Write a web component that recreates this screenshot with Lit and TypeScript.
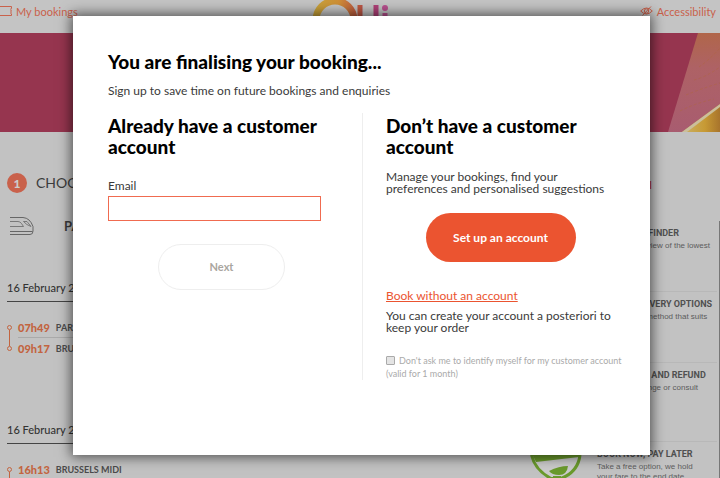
import { LitElement, html, css, svg } from "lit";
import { customElement } from "lit/decorators.js";

const sans = css`Lato, "Liberation Sans", sans-serif`;

interface Stop { time: string; station: string; }
interface Service { title: string; text: string; }

const SERVICES: Service[] = [
  { title: "BEST PRICE FINDER", text: "Get a full overview of the lowest\nfares" },
  { title: "SIMPLE DELIVERY OPTIONS", text: "Choosing the method that suits\nyou" },
  { title: "EXCHANGES AND REFUND", text: "Cancel, exchange or consult" },
  { title: "BOOK NOW, PAY LATER", text: "Take a free option, we hold\nyour fare to the end date" },
];

@customElement("site-header")
class SiteHeader extends LitElement {
  static styles = css`
    :host { display: block; font-family: ${sans}; }
    header { display: grid; grid-template-columns: 1fr auto 1fr; height: 33px; background: #c4c4c4; overflow: hidden; }
    a { display: flex; align-items: center; gap: 4px; height: 22px; color: #c9614b; font-size: 11px; text-decoration: none; white-space: nowrap; }
    .end { justify-content: flex-end; padding-right: 4px; }
    .logo { display: block; margin-right: 20px; }
  `;
  render() {
    return html`<header>
      <a href="#bookings">
        <svg width="12" height="12" viewBox="0 0 12 12" fill="none" stroke="#c9614b"><path d="M0 1.5H11.5V3.5Q9.5 4 11.5 5Q9.5 6 11.5 7Q9.5 8 11.5 9V10.5H0" /></svg>
        My bookings</a>
      <svg class="logo" width="78" height="33" viewBox="0 0 78 33" role="img" aria-label="Oui">
        <defs>
          <linearGradient id="ring"><stop offset="0" stop-color="#c8a23a" /><stop offset=".6" stop-color="#cf8f36" /><stop offset="1" stop-color="#c0603f" /></linearGradient>
          <linearGradient id="bowl"><stop offset="0" stop-color="#bf5a40" /><stop offset=".5" stop-color="#ab3d62" /><stop offset="1" stop-color="#b0417a" /></linearGradient>
        </defs>
        <circle cx="24" cy="20" r="19" fill="none" stroke="url(#ring)" stroke-width="7" />
        <path d="M49 5V20Q49 28 57 28Q65 28 65 20V5" fill="none" stroke="url(#bowl)" stroke-width="5" />
        <path d="M74 13V30" stroke="#b9508f" stroke-width="5" /><circle cx="74" cy="8" r="3" fill="#b9508f" />
      </svg>
      <a class="end" href="#accessibility">
        <svg width="13" height="12" viewBox="0 0 13 12" fill="none" stroke="#c9614b"><path d="M.7 6Q6.5 0 12.3 6Q6.5 12 .7 6ZM2.5 10.5L11 1.500" /><circle cx="6.5" cy="6" r="2.2" /></svg>
        Accessibility</a>
    </header>`;
  }
}

@customElement("promo-banner")
class PromoBanner extends LitElement {
  static styles = css`
    :host { display: flex; justify-content: flex-end; height: 99px; background: #96354f; }
  `;
  render() {
    return html`<svg width="52" height="99" viewBox="0 0 52 99" aria-hidden="true">
      <defs>
        <linearGradient id="skin" x2="0" y2="1"><stop offset="0" stop-color="#b0664a" /><stop offset=".35" stop-color="#ae6265" /><stop offset="1" stop-color="#a85c70" /></linearGradient>
        <linearGradient id="gold"><stop offset="0" stop-color="#c9b26a" /><stop offset=".6" stop-color="#c79a34" /><stop offset="1" stop-color="#a8742c" /></linearGradient>
      </defs>
      <path d="M30 0H52V99H0Z" fill="url(#skin)" />
      <path d="M31 34Q40 28 52 15M26 47Q38 44 52 34M18 62Q32 56 52 50M12 78Q28 70 46 66" fill="none" stroke="#b0663f" stroke-opacity=".5" stroke-dasharray="3 2" />
      <path d="M14 99L52 71V99Z" fill="url(#gold)" />
      <path d="M14 99L52 71V74L19 99Z" fill="#cbbf9c" />
    </svg>`;
  }
}

@customElement("journey-list")
class JourneyList extends LitElement {
  static styles = css`
    :host { display: block; flex: 1; padding: 40px 0 0 7px; font-family: ${sans}; color: #3c3c3c; }
    h2 { display: flex; align-items: center; gap: 9px; margin: 0; font-size: 14px; font-weight: 400; line-height: 22px; }
    .step { display: grid; place-items: center; width: 20px; height: 20px; border-radius: 50%; background: #c9614b; color: #ccc; font-size: 12px; font-weight: 900; }
    .train { display: flex; align-items: center; gap: 30px; height: 24px; margin: 20px 0 43px 2px; font-size: 13px; font-weight: 700; }
    h3 { margin: 0; padding: 0 0 6px; border-bottom: 1px solid #444; font-size: 11px; font-weight: 500; line-height: 14px; color: #333; }
    ul { list-style: none; height: 105px; margin: 0 0 16px; padding: 15px 0 0; box-sizing: border-box; }
    li { display: flex; gap: 6px; height: 21px; line-height: 21px; font-size: 9px; font-weight: 700; color: #4b4b4b; }
    .mark { display: flex; flex-direction: column; align-items: center; width: 5px; padding-top: 8px; }
    .dot { flex: none; width: 3px; height: 3px; border: 1px solid #c2643f; border-radius: 50%; }
    .link { flex: none; width: 1px; height: 16px; background: #c2643f; }
    .row { display: flex; gap: 6px; flex: 1; box-sizing: border-box; height: 21px; }
    .first .row { border-bottom: 1px solid #aaa; }
    time { font-size: 11px; font-weight: 900; color: #c2643f; }
  `;
  private journey(stops: Stop[]) {
    return html`<h3>16 February 2019</h3><ul>${stops.map((s, i) => html`
      <li class=${i ? "last" : "first"}><span class="mark"><span class="dot"></span>${i ? "" : html`<span class="link"></span>`}</span>
      <span class="row"><time>${s.time}</time>${s.station}</span></li>`)}</ul>`;
  }
  render() {
    return html`<h2><span class="step">1</span>CHOOSE</h2>
      <div class="train"><svg width="25" height="20" viewBox="0 0 25 20" fill="none" stroke="#666"><path d="M1 1.500H14Q21 2 24 10.500V15Q24 18.500 21 18.500H1" /><path d="M1 15.500H23.500" /><path d="M1 5.500H9Q11 5.500 12.500 7.500L14.500 10.500H1" stroke-width=".8" /><path d="M14.500 5.500H18L22 10.500Q17.500 9 14.500 5.500Z" stroke-width=".8" /></svg>PARIS</div>
      ${this.journey([{ time: "07h49", station: "PARIS NORD" }, { time: "09h17", station: "BRUSSELS MIDI" }])}
      ${this.journey([{ time: "16h13", station: "BRUSSELS MIDI" }])}`;
  }
}

@customElement("service-list")
class ServiceList extends LitElement {
  static styles = css`
    :host { display: block; width: 190px; padding-top: 44px; font-family: Roboto, sans-serif; color: #6e6e6e; }
    h2 { margin: 0 0 27px; width: 122px; text-align: right; font: 700 12px/18px ${sans}; color: #b5403f; white-space: nowrap; }
    .box { border-right: 1px solid #777; padding-right: 2px; }
    article { display: flex; height: 71px; box-sizing: border-box; border-bottom: 1px solid #b8b8b8; }
    article:nth-child(3) { height: 79px; }
    article:last-child { height: 50px; border: 0; }
    .icon { flex: none; width: 67px; }
    h3 { margin: 6px 0 2px; font-size: 9px; line-height: 12px; color: #505050; white-space: nowrap; }
    p { margin: 0; font: 8px/10px "Liberation Sans", sans-serif; color: #5c5c5c; white-space: pre-line; }
  `;
  private icon = svg`<svg width="54" height="40" viewBox="0 0 54 40" aria-hidden="true">
    <path d="M1.500 13Q5 28 21 36.500H31Q48 30 50 13" fill="#cbcbcb" stroke="#6a9a2c" stroke-width="3" />
    <path d="M2 12H50L49 15L6 20Z" fill="#6a9a2c" />
    <path d="M19 29Q29 24 38 24Q37 33 29 33Q22 33 19 29Z" fill="#6a9a2c" />
    <path d="M23 34H31V40H23Z" fill="#6a9a2c" />
  </svg>`;
  render() {
    return html`<h2>BOOK WITH OUI</h2><div class="box">${SERVICES.map((s, i) => html`
      <article><div class="icon">${i === 3 ? this.icon : ""}</div>
      <div><h3>${s.title}</h3><p>${s.text}</p></div></article>`)}</div>`;
  }
}

@customElement("login-dialog")
class LoginDialog extends LitElement {
  static styles = css`
    :host { display: block; }
    section { box-sizing: border-box; min-height: 439px; padding: 35px 35px 0; background: #fff; box-shadow: 0 0 12px 2px rgba(0, 0, 0, .6); font: 12px/12px ${sans}; color: #3a3a3a; }
    h1, h2 { margin: 0; font-size: 19px; line-height: 21px; font-weight: 900; color: #000; }
    p { margin: 0; }
    .lead { margin: 13px 0 16px; }
    .cols { display: grid; grid-template-columns: 255fr 252fr; min-height: 266px; }
    .known { padding-right: 41px; border-right: 1px solid #eee; }
    .fresh { padding-left: 23px; }
    .known, .fresh { padding-top: 2px; }
    label.mail { display: block; margin: 23px 0 4px; }
    input.mail { box-sizing: border-box; display: block; width: 100%; height: 25px; border: 1px solid #f06b50; padding: 2px 6px; font: inherit; outline: none; }
    button { display: block; margin: 0 auto; padding: 0; border-radius: 25px; font: 700 12px/14px ${sans}; }
    .next { margin: 23px 0 0 50px; width: 127px; height: 46px; border: 1px solid #eee; background: #fff; color: #aaa69f; font-size: 11px; }
    .create { margin-top: 18px; width: 150px; height: 49px; border: 0; background: #eb5430; color: #fff; }
    .manage { margin-top: 14px; }
    .skip { display: inline-block; margin: 28px 0 8px; color: #eb5430; }
    .remember { display: block; margin: 20px -12px 0 0; font: 9px/13px ${sans}; color: #aaa; }
    .remember input { appearance: none; box-sizing: border-box; width: 9px; height: 9px; margin: 0 4px 0 0; border: 1px solid #aaa; border-radius: 1px; background: #e4e4e4; vertical-align: -1px; }
    .remember input:checked { background: #eb5430; }
  `;
  render() {
    return html`<section role="dialog" aria-labelledby="title">
      <h1 id="title">You are finalising your booking...</h1>
      <p class="lead">Sign up to save time on future bookings and enquiries</p>
      <div class="cols">
        <div class="known"><h2>Already have a customer account</h2>
          <label class="mail" for="email">Email</label><input class="mail" id="email" type="email" />
          <button class="next">Next</button></div>
        <div class="fresh"><h2>Don’t have a customer account</h2>
          <p class="manage">Manage your bookings, find your preferences and personalised suggestions</p>
          <button class="create">Set up an account</button>
          <a class="skip" href="#guest">Book without an account</a>
          <p>You can create your account a posteriori to keep your order</p>
          <label class="remember"><input type="checkbox" />Don't ask me to identify myself for my customer account (valid for 1 month)</label></div>
      </div>
    </section>`;
  }
}

@customElement("app-root")
class AppRoot extends LitElement {
  static styles = css`
    :host { display: block; position: relative; height: 100vh; overflow: hidden; background: #c2c2c2; }
    main { display: flex; }
    .overlay { position: absolute; inset: 0; padding: 16px 70px 0 73px; }
  `;
  render() {
    return html`<site-header></site-header><promo-banner></promo-banner>
      <main><journey-list></journey-list><service-list></service-list></main>
      <div class="overlay"><login-dialog></login-dialog></div>`;
  }
}
